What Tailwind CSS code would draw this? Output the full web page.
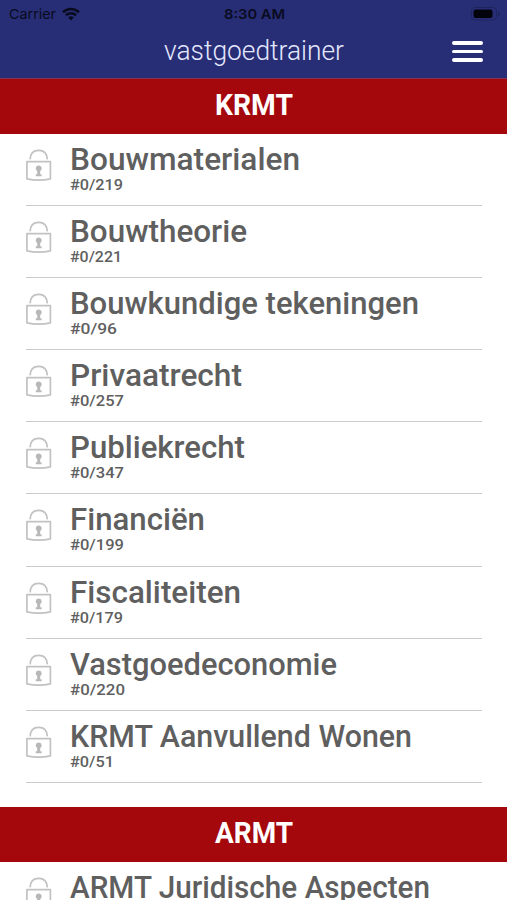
<!DOCTYPE html>
<html lang="nl">
<head>
    <meta charset="utf-8">
    <meta name="viewport" content="width=device-width, initial-scale=1">
    <title>vastgoedtrainer</title>
    <script src="https://cdn.jsdelivr.net/npm/@tailwindcss/browser@4"></script>
</head>
<body class="h-screen overflow-hidden bg-white font-['Roboto',sans-serif] text-[#5f5f5f]">
    <header class="h-[79px] bg-[#282e76] border-b border-[#843457]">
        <div class="grid grid-cols-3 items-center h-7 pl-[9px] pr-[6px] text-[#090b20] font-['Inter',sans-serif]">
            <div class="flex items-center gap-[6px]">
                <svg class="w-[47px] h-5" fill="currentColor"><text class="text-[13.5px]" x="0" y="15" textLength="47" lengthAdjust="spacingAndGlyphs">Carrier</text></svg>
                <svg class="w-[18px] h-[14px]" viewBox="0 0 18 14" fill="none" stroke="currentColor" stroke-width="2.6">
                    <path d="M1 5.2a11.6 11.6 0 0 1 16 0"/>
                    <path d="M3.9 8.3a7.4 7.4 0 0 1 10.2 0"/>
                    <path d="M9 13.6 6.1 10.6a4.2 4.2 0 0 1 5.8 0z" fill="currentColor" stroke="none"/>
                </svg>
            </div>
            <svg class="w-[62px] h-5 justify-self-center" fill="currentColor"><text class="text-[13.5px] font-semibold" x="0" y="15" textLength="61" lengthAdjust="spacingAndGlyphs">8:30 AM</text></svg>
            <svg class="w-[30px] h-[14px] justify-self-end" viewBox="0 0 30 14">
                <rect x=".5" y=".5" width="25" height="12.5" rx="3.5" fill="none" stroke="#1f245f"/>
                <rect x="2.5" y="2.5" width="19" height="8.5" rx="2" fill="#03040b"/>
                <path d="M27 4.5c2.4.8 2.4 4.2 0 5z" fill="#1f245f"/>
            </svg>
        </div>
        <div class="grid grid-cols-[1fr_auto_1fr] items-center h-[46px] px-6">
            <span></span>
            <svg class="w-[184px] h-10" fill="#e4e8ff"><text class="text-[27px] font-light" x="2" y="29" textLength="180" lengthAdjust="spacingAndGlyphs">vastgoedtrainer</text></svg>
            <div class="flex flex-col gap-[5px] justify-self-end pt-px">
                <i class="block w-[31px] h-[3.5px] rounded-full bg-white"></i>
                <i class="block w-[31px] h-[3.5px] rounded-full bg-white"></i>
                <i class="block w-[31px] h-[3.5px] rounded-full bg-white"></i>
            </div>
        </div>
    </header>

    <main id="list"></main>

<script>
    // titel, teller en tekstbreedtes
    const sections = [
        ['KRMT', [
            ['Bouwmaterialen', '#0/219', 230, 53],
            ['Bouwtheorie', '#0/221', 177, 52],
            ['Bouwkundige tekeningen', '#0/96', 349, 47],
            ['Privaatrecht', '#0/257', 172, 54],
            ['Publiekrecht', '#0/347', 175, 54],
            ['Financiën', '#0/199', 135, 54],
            ['Fiscaliteiten', '#0/179', 171, 53],
            ['Vastgoedeconomie', '#0/220', 267, 55],
            ['KRMT Aanvullend Wonen', '#0/51', 342, 44],
        ]],
        ['ARMT', [
            ['ARMT Juridische Aspecten', '#0/150', 360, 54],
        ]],
    ];

    const lock = `
        <svg class="w-[26px] h-[33px] shrink-0 mt-[15px]" viewBox="0 0 26 33" fill="none" stroke="#c2c2c2" stroke-width="1.7">
            <path d="M4.1 10.4C4.3 4.6 7.6 1.3 12.7 1.3S21.1 4.6 21.3 10.4"/>
            <path d="M.9 12.7H24.4V29.8Q12.7 32.6.9 29.8Z" stroke-linejoin="round"/>
            <circle cx="12.7" cy="19.3" r="2.9" fill="#b8b8b8" stroke="none"/>
            <path d="M11.2 20H14.2V25.3H15.6V27.2H9.8V25.3H11.2Z" fill="#b8b8b8" stroke="none"/>
        </svg>`;

    const row = ([title, count, w, cw]) => `
        <li class="flex h-[72.1px] border-b-[1.5px] border-[#cbcbcb]">
            ${lock}
            <svg class="w-[400px] h-[70px] ml-[17px]" fill="currentColor">
                <text class="text-[31px] font-medium" x="1" y="36.3" textLength="${w}" lengthAdjust="spacingAndGlyphs">${title}</text>
                <text class="text-[15.5px] font-medium" x="1" y="56" textLength="${cw}" lengthAdjust="spacingAndGlyphs">${count}</text>
            </svg>
        </li>`;

    document.getElementById('list').innerHTML = sections.map(([name, rows]) => `
        <section class="mb-6">
            <h2 class="flex justify-center h-[55px] bg-[#a4070c]">
                <svg class="w-[84px] h-[55px]" fill="#fff"><text class="text-[30px] font-bold" x="3" y="36" textLength="78" lengthAdjust="spacingAndGlyphs">${name}</text></svg>
            </h2>
            <ul class="ml-[26px] mr-[25px]">${rows.map(row).join('')}</ul>
        </section>`).join('');
</script>
</body>
</html>
